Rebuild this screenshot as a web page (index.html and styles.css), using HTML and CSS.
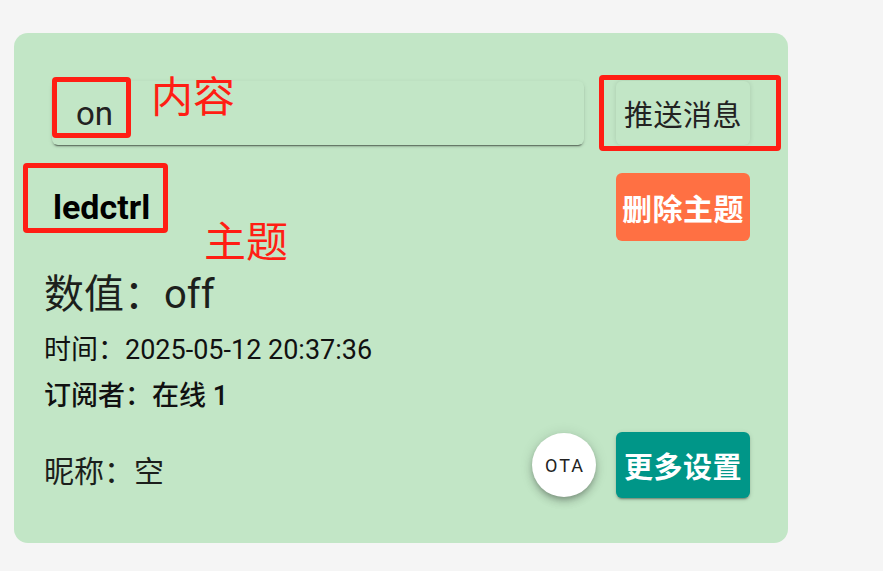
FILE: index.html
```html
<!DOCTYPE html>
<html lang="zh-CN">
<head>
<meta charset="utf-8">
<title>Topic card</title>
<link rel="stylesheet" href="styles.css">
</head>
<body>
<div class="page">
  <div class="card">
    <div class="row send-row">
      <div class="field"><span class="field-value">on</span></div>
      <button class="btn btn-push">推送消息</button>
    </div>
    <div class="row topic-row">
      <div class="topic">ledctrl</div>
      <button class="btn btn-orange">删除主题</button>
    </div>
    <div class="value">数值：off</div>
    <div class="info">时间：2025-05-12 20:37:36</div>
    <div class="info info-strong">订阅者：在线 1</div>
    <div class="row bottom-row">
      <div class="nick">昵称：空</div>
      <div class="actions">
        <button class="ota">OTA</button>
        <button class="btn btn-teal">更多设置</button>
      </div>
    </div>

    <div class="mark mark-on"></div>
    <div class="mark mark-topic"></div>
    <div class="mark mark-push"></div>
    <div class="note note-content">内容</div>
    <div class="note note-topic">主题</div>
  </div>
</div>
</body>
</html>
```
FILE: styles.css
```css
html, body {
  margin: 0;
  padding: 0;
}
body {
  background: #f5f5f5;
  font-family: Roboto, "Noto Sans CJK SC", sans-serif;
  color: #1c1f1c;
}
.page {
  padding: 33px 0 0 14px;
}
.card {
  position: relative;
  width: 774px;
  box-sizing: border-box;
  background: #c2e6c6;
  border-radius: 14px;
  padding: 48px 38px 45px 30px;
}
.row {
  display: flex;
  align-items: center;
}
.send-row {
  margin-left: 8px;
  gap: 32px;
}
.field {
  flex: 1;
  height: 64px;
  box-sizing: border-box;
  border-radius: 6px;
  display: flex;
  align-items: center;
  padding-left: 24px;
  font-size: 33px;
  color: #222;
  box-shadow: 0 3px 1px -2px rgba(0,0,0,.4), 0 2px 2px 0 rgba(0,0,0,.14), 0 1px 5px 0 rgba(0,0,0,.08);
}
.btn {
  width: 134px;
  height: 64px;
  border: none;
  border-radius: 6px;
  padding: 0;
  font-family: Roboto, "Noto Sans CJK SC", sans-serif;
  font-size: 29px;
  letter-spacing: 0.5px;
  cursor: pointer;
}
.btn-push {
  background: #c2e6c6;
  color: #222;
  font-weight: 400;
  box-shadow: 0 0 5px rgba(0,0,0,.12);
}
.topic-row {
  margin-top: 28px;
  justify-content: space-between;
}
.topic {
  padding-left: 9px;
  font-size: 34px;
  font-weight: 700;
  color: #000;
}
.btn-orange {
  height: 68px;
  background: #ff7043;
  color: #fff;
  font-weight: 700;
  font-size: 30px;
}
.value {
  margin-top: 22px;
  font-size: 40px;
  line-height: 64px;
}
.info {
  font-size: 27px;
  line-height: 46px;
  color: #111;
}
.info-strong {
  font-weight: 500;
}
.bottom-row {
  margin-top: 13px;
  justify-content: space-between;
}
.nick {
  margin-top: 8px;
  font-size: 30px;
}
.actions {
  display: flex;
  align-items: center;
  gap: 20px;
}
.ota {
  width: 64px;
  height: 64px;
  border: none;
  border-radius: 50%;
  background: #fff;
  padding: 0 0 0 2px;
  font-family: Roboto, sans-serif;
  font-size: 18px;
  letter-spacing: 2px;
  color: #222;
  box-shadow: 0 3px 5px -1px rgba(0,0,0,.2), 0 5px 8px 0 rgba(0,0,0,.14), 0 1px 14px 0 rgba(0,0,0,.12);
}
.btn-teal {
  height: 66px;
  background: #009688;
  color: #fff;
  font-weight: 700;
  box-shadow: 0 3px 1px -2px rgba(0,0,0,.2), 0 2px 2px 0 rgba(0,0,0,.14), 0 1px 5px 0 rgba(0,0,0,.12);
}
.mark {
  position: absolute;
  box-sizing: border-box;
  border: 5px solid #ff1e14;
  border-radius: 4px;
}
.mark-on {
  left: 38px;
  top: 44px;
  width: 79px;
  height: 61px;
}
.mark-topic {
  left: 9px;
  top: 130px;
  width: 145px;
  height: 70px;
}
.mark-push {
  left: 585px;
  top: 42px;
  width: 182px;
  height: 76px;
}
.note {
  position: absolute;
  font-family: "Noto Sans CJK SC", sans-serif;
  font-size: 42px;
  line-height: 1;
  color: #ff1e14;
}
.note-content {
  left: 137px;
  top: 40px;
}
.note-topic {
  left: 190px;
  top: 185px;
}
```
